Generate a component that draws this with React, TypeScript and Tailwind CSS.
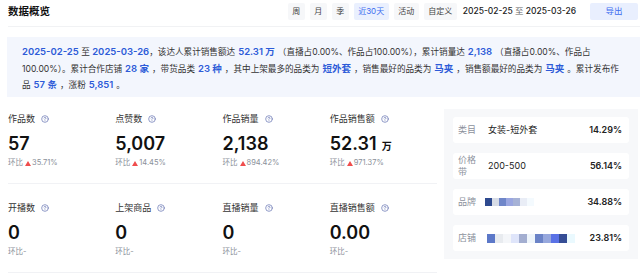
import { CircleHelp } from "lucide-react";

const tabs = ["周", "月", "季", "近30天", "活动", "自定义"];

const topRow = [
  { label: "作品数", value: "57", rate: "35.71%" },
  { label: "点赞数", value: "5,007", rate: "14.45%" },
  { label: "作品销量", value: "2,138", rate: "894.42%" },
  { label: "作品销售额", value: "52.31", unit: "万", rate: "971.37%" },
];

const bottomRow = [
  { label: "开播数", value: "0" },
  { label: "上架商品", value: "0" },
  { label: "直播销量", value: "0" },
  { label: "直播销售额", value: "0.00" },
];

const brandBlocks = ["#2e4a8f", "#d7dce6", "#6f86c9", "#9aa6e0", "#a6b2d6", "#e9edf6", "#f4fafe"];
const shopBlocks = ["#5c78c8", "#e8ebef", "#f4f6f9", "#dfe5fa", "#a3aed0", "#eef5fb", "#6b83c7", "#97a8dd", "#5a72e6", "#354d95", "#eaf9fe"];

function B({ children }: { children: React.ReactNode }) {
  return <span className="font-semibold text-[#2d5bd8] text-[9.5px] mx-[3px]">{children}</span>;
}

function Metric({ m }: { m: { label: string; value: string; unit?: string; rate?: string } }) {
  return (
    <div className="w-[108px]">
      <div className="flex items-center h-[14px] leading-[14px] text-[9px] text-[#333]">
        {m.label}
        <CircleHelp size={8} strokeWidth={2.2} className="ml-[6px] text-[#6b78b5]" />
      </div>
      <div className="mt-[7px] h-[22px] leading-[22px] flex items-baseline text-[18px] font-semibold text-[#111]">
        {m.value}
        {m.unit && <span className="ml-[5px] text-[10px]">{m.unit}</span>}
      </div>
      <div className="mt-[2px] h-[12px] leading-[12px] flex items-center text-[7.5px] text-[#8a8f99]">
        环比
        {m.rate ? (
          <>
            <svg width="6" height="5" viewBox="0 0 6 5" className="ml-[2px] mr-[1px]">
              <polygon points="3,0 6,5 0,5" fill="#f04d4d" />
            </svg>
            {m.rate}
          </>
        ) : (
          "-"
        )}
      </div>
    </div>
  );
}

function Blocks({ colors, w, h }: { colors: string[]; w: string; h: string }) {
  return (
    <div className={`flex ${h}`}>
      {colors.map((c, i) => (
        <div key={i} className={`${w} h-full`} style={{ background: c }} />
      ))}
    </div>
  );
}

export default function App() {
  return (
    <div className="w-[640px] h-[275px] overflow-hidden bg-white font-['Inter','Noto_Sans_CJK_SC',sans-serif] text-[#333]">
      {/* header */}
      <div className="ml-2 h-[27px] flex items-start pt-[3px] border-b border-[#f1f2f4]">
        <h1 className="h-[17px] leading-[17px] text-[10.5px] font-bold text-[#111]">数据概览</h1>
        <div className="ml-auto flex items-center gap-[5px]">
          {tabs.map((t) => (
            <div
              key={t}
              className={`h-[17px] leading-[17px] px-[4.5px] rounded-[2px] text-[8px] ${t === "近30天" ? "bg-[#eaf0fe] text-[#3b6cf0]" : "bg-[#f6f7f9] text-[#444]"}`}
            >
              {t}
            </div>
          ))}
          <div className="ml-[1px] text-[8.5px] font-medium text-[#222] h-[17px] leading-[17px]">
            2025-02-25 <span className="text-[#666] font-normal">至</span> 2025-03-26
          </div>
          <button className="ml-[9px] mr-[2px] w-[48px] h-[17px] rounded-[2px] bg-[#e9effe] text-[#3b6cf0] text-[8.5px]">
            导出
          </button>
        </div>
      </div>

      {/* summary */}
      <div className="ml-[7px] mt-[10px] h-[60px] bg-[#f3f6fd] pl-[15px] pt-[7px] text-[8.6px] leading-[16.5px] text-[#333] whitespace-nowrap">
        <div>
          <span className="font-semibold text-[#2d5bd8] text-[9.5px]">2025-02-25</span> 至{" "}
          <span className="font-semibold text-[#2d5bd8] text-[9.5px]">2025-03-26</span>，该达人累计销售额达
          <B>52.31 万</B>（直播占0.00%、作品占100.00%），累计销量达<B>2,138</B>（直播占0.00%、作品占
        </div>
        <div>
          100.00%）。累计合作店铺<B>28 家</B>，带货品类<B>23 种</B>，其中上架最多的品类为<B>短外套</B>，销售最好的品类为
          <B>马夹</B>，销售额最好的品类为<B>马夹</B>。累计发布作
        </div>
        <div>
          品<B>57 条</B>，涨粉<B>5,851</B>。
        </div>
      </div>

      <div className="flex">
        {/* metrics */}
        <div className="ml-2 w-[429px]">
          <div className="flex pt-[15px] pb-[14px] border-b border-[#f1f2f5]">
            {topRow.map((m) => (
              <Metric key={m.label} m={m} />
            ))}
          </div>
          <div className="flex pt-[17px] pb-[14px] border-b border-[#f1f2f5]">
            {bottomRow.map((m) => (
              <Metric key={m.label} m={m} />
            ))}
          </div>
        </div>

        {/* side panel */}
        <div className="ml-[7px] mt-[12px] w-[194px] h-[150px] bg-[#f7f8fa] px-[9px] pt-[8px] flex flex-col gap-[10px]">
          <div className="h-[26px] bg-white rounded-[3px] flex items-center pl-[5px] pr-[7px] text-[9px]">
            <span className="w-[30px] text-[#8c919c]">类目</span>
            <span className="text-[#222]">女装-短外套</span>
            <span className="ml-auto font-semibold text-[#222]">14.29%</span>
          </div>
          <div className="h-[26px] bg-white rounded-[3px] flex items-center pl-[5px] pr-[7px] text-[9px]">
            <span className="w-[20px] mr-[10px] leading-[12px] text-[#8c919c]">价格带</span>
            <span className="text-[#222]">200-500</span>
            <span className="ml-auto font-semibold text-[#222]">56.14%</span>
          </div>
          <div className="h-[26px] bg-white rounded-[3px] flex items-center pl-[5px] pr-[7px] text-[9px]">
            <span className="w-[27px] text-[#8c919c]">品牌</span>
            <Blocks colors={brandBlocks} w="w-[7px]" h="h-[8px]" />
            <span className="ml-auto font-semibold text-[#222]">34.88%</span>
          </div>
          <div className="h-[26px] bg-white rounded-[3px] flex items-center pl-[5px] pr-[7px] text-[9px]">
            <span className="w-[29px] text-[#8c919c]">店铺</span>
            <Blocks colors={shopBlocks} w="w-[8px]" h="h-[9px]" />
            <span className="ml-auto font-semibold text-[#222]">23.81%</span>
          </div>
        </div>
      </div>
    </div>
  );
}
